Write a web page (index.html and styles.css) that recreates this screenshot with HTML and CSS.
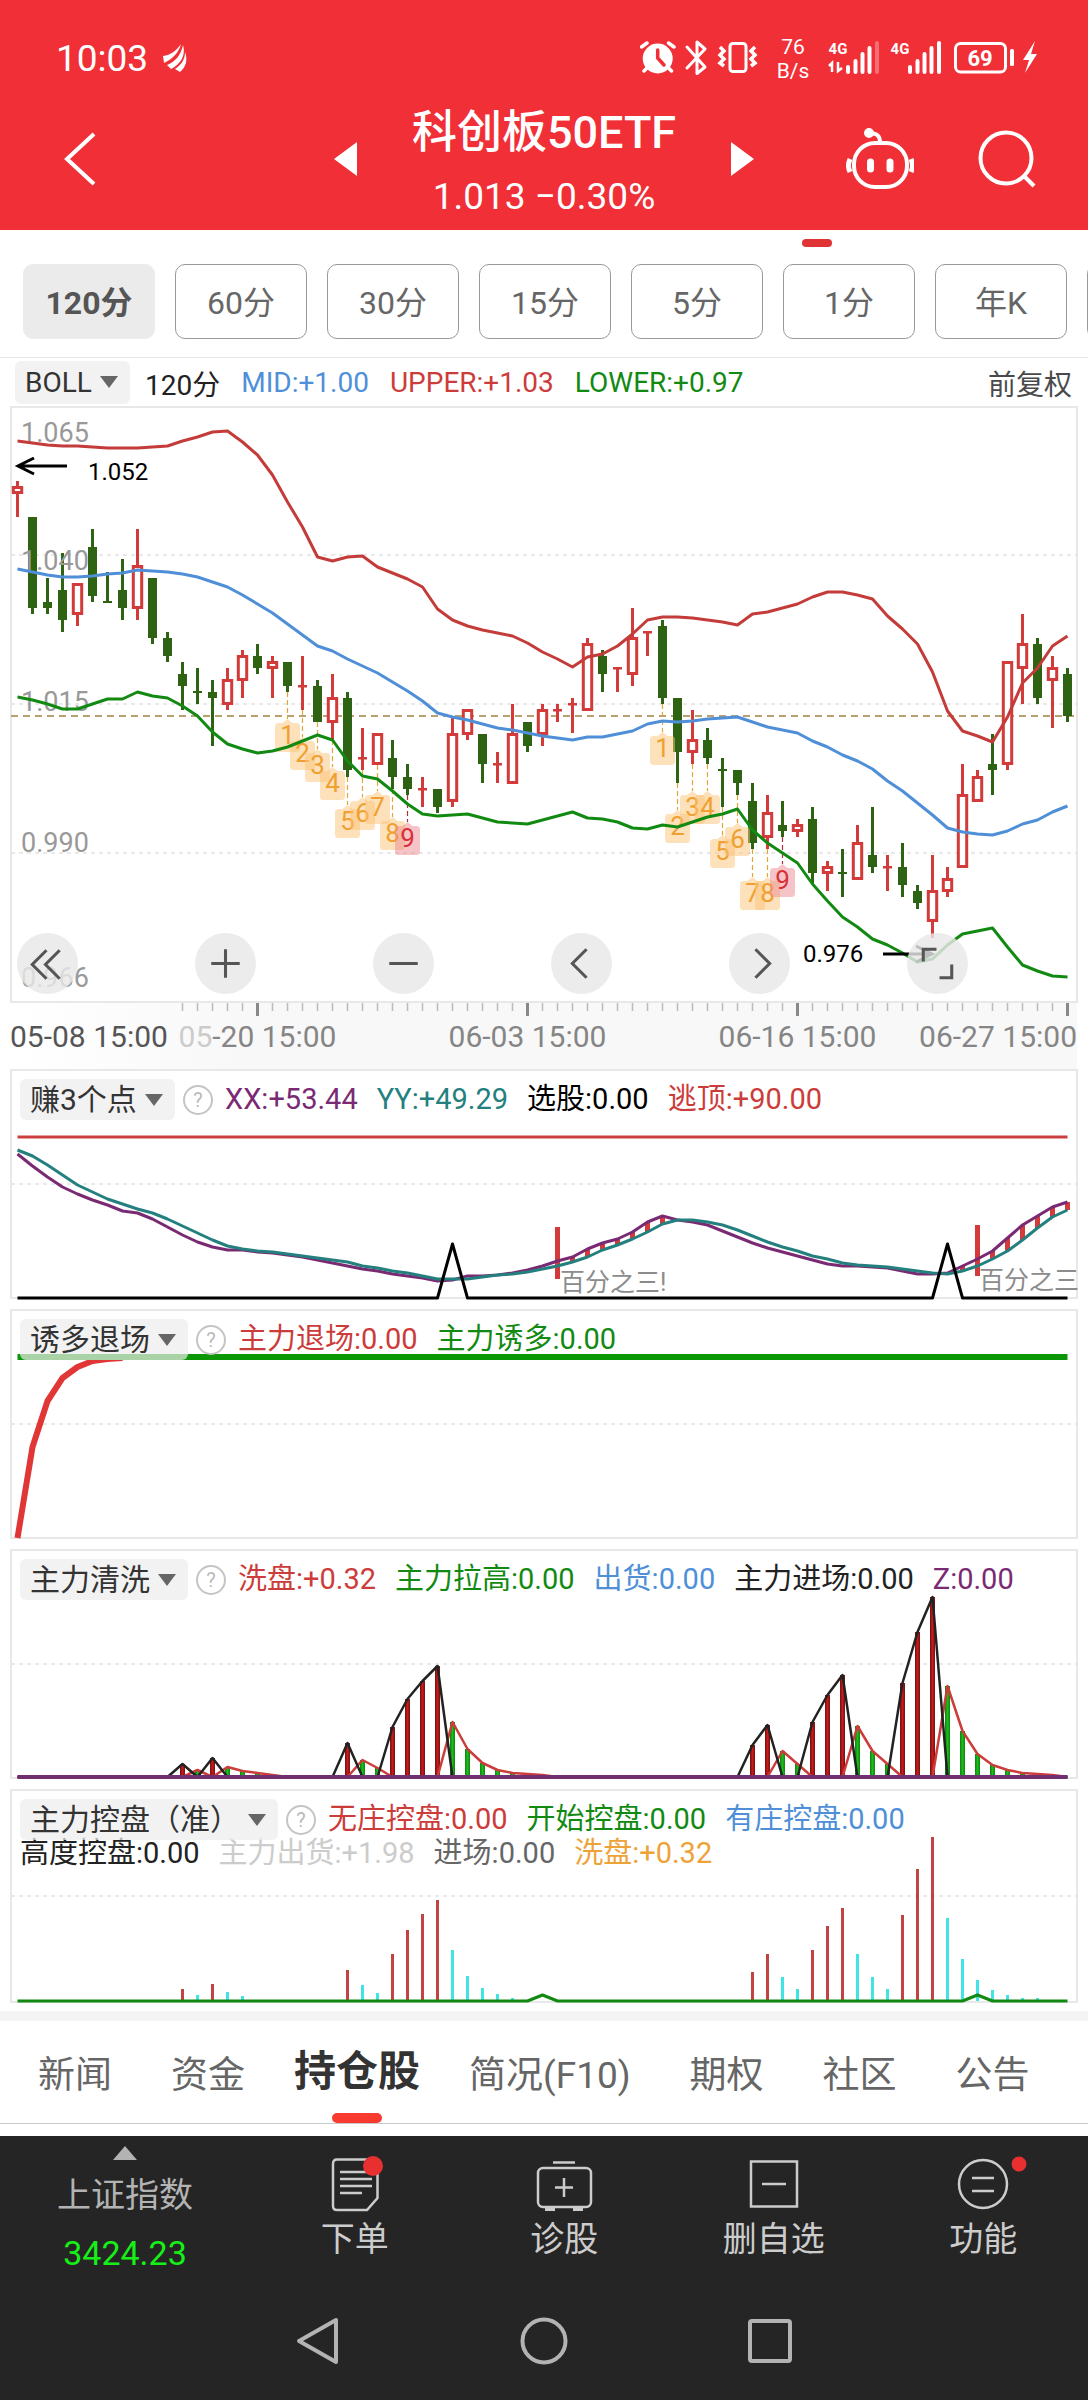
FILE: index.html
```html
<!DOCTYPE html>
<html lang="zh-CN">
<head>
    <meta charset="UTF-8">
    <meta name="viewport" content="width=device-width, initial-scale=1.0">
    <title>科创板50ETF</title>
    <link rel="stylesheet" href="styles.css">
</head>
<body>
    <header class="top">
        <div class="status">
            <div class="clock">
                <span>10:03</span>
                <svg width="26" height="30" viewBox="0 0 26 30" fill="#fff">
                    <path d="M1 13 C9 12 14 8 19 1 C17 9 11 16 2 20 Z"/>
                    <path d="M5 22 C13 19 19 12 21 2 C24 12 19 21 9 26 Z"/>
                    <path d="M13 26 C19 22 23 17 23 9 C26 17 24 24 18 29 Z"/>
                </svg>
            </div>
            <svg class="status-icons" width="400" height="56" viewBox="640 30 400 56">
                <!-- alarm -->
                <circle cx="657.7" cy="58.5" r="15" fill="#fff"/>
                <path d="M641.5 47 L647 43 M674 47 L668.500 43 M647 68 L644 71 M668.500 68 L671.500 71" stroke="#fff" stroke-width="3.500" stroke-linecap="round"/>
                <path d="M657.700 50 V58 L664 65" fill="none" stroke="#f12f37" stroke-width="3.500" stroke-linecap="round"/>
                <!-- bluetooth -->
                <path d="M687 47 L705 67 L697 73.500 V42 L705 49 L687 68" fill="none" stroke="#fff" stroke-width="3" stroke-linejoin="round" stroke-linecap="round"/>
                <!-- vibrate -->
                <rect x="730" y="43.500" width="16" height="28" rx="3" fill="none" stroke="#fff" stroke-width="3"/>
                <path d="M720 47 L724 51 L720 55 L724 59 L720 63 L724 66 M755 47 L751 51 L755 55 L751 59 L755 63 L751 66" fill="none" stroke="#fff" stroke-width="3.500"/>
                <text x="793" y="54" font-size="21" class="st">76</text>
                <text x="793" y="78" font-size="21" class="st">B/s</text>
                <text x="838" y="54" font-size="15" class="st bold">4G</text>
                <path d="M832 72 V63 L829 66 M838 62 V71 L842 68" fill="none" stroke="#fff" stroke-width="2.500"/>
                <path d="M848 67 V72 M855.500 61 V72 M862.500 54 V72 M869.500 48 V72" class="bars"/>
                <path d="M877 43 V72" class="bars dim"/>
                <text x="900" y="54" font-size="15" class="st bold">4G</text>
                <path d="M910 67 V72 M917.500 61 V72 M924.500 54 V72 M931.500 48 V72 M939 43 V72" class="bars"/>
                <!-- battery -->
                <rect x="955.500" y="43.500" width="50" height="28.500" rx="5" fill="none" stroke="#fff" stroke-width="3"/>
                <text x="980" y="66" font-size="22" class="st bold">69</text>
                <rect x="1010" y="49" width="4" height="17" rx="1.500" fill="#fff"/>
                <path d="M1035 41 L1023 60 H1029 L1025 73 L1037 54 H1031 Z" fill="#fff"/>
            </svg>
        </div>
        <div class="title-bar">
            <button class="icon-btn back" aria-label="返回">
                <svg width="36" height="56" viewBox="0 0 36 56"><path d="M32 3 L5 28 L32 53" fill="none" stroke="#fff" stroke-width="4"/></svg>
            </button>
            <button class="icon-btn" aria-label="上一只">
                <svg width="24" height="36" viewBox="0 0 24 36"><path d="M24 1 V35 L1 18 Z" fill="#fff"/></svg>
            </button>
            <div class="stock">
                <h1>科创板50ETF</h1>
                <p>1.013 −0.30%</p>
            </div>
            <button class="icon-btn" aria-label="下一只">
                <svg width="24" height="36" viewBox="0 0 24 36"><path d="M0 1 V35 L23 18 Z" fill="#fff"/></svg>
            </button>
            <div class="tools">
                <button class="icon-btn" aria-label="助手">
                    <svg width="68" height="62" viewBox="844 128 68 62" fill="none" stroke="#fff" stroke-width="4">
                        <rect x="852" y="143" width="53" height="44" rx="21"/>
                        <path d="M867 133 C875 133 878 136 878 142"/>
                        <circle cx="867" cy="133" r="3" fill="#fff"/>
                        <path d="M848 159 Q845 166 848 172 M909 159 Q912 166 909 172" stroke-width="5"/>
                        <path d="M868.500 162 V169 M888 162 V169" stroke-width="7" stroke-linecap="round"/>
                    </svg>
                </button>
                <button class="icon-btn" aria-label="搜索">
                    <svg width="60" height="58" viewBox="978 131 60 58" fill="none" stroke="#fff" stroke-width="4">
                        <circle cx="1006" cy="159" r="25.500"/>
                        <path d="M1024 177 L1034 187"/>
                    </svg>
                </button>
            </div>
        </div>
    </header>

    <main>
        <div class="periods-wrap">
            <i class="mark"></i>
            <nav class="periods">
                <button class="period on">120分</button>
                <button class="period">60分</button>
                <button class="period">30分</button>
                <button class="period">15分</button>
                <button class="period">5分</button>
                <button class="period">1分</button>
                <button class="period">年K</button>
                <button class="period" aria-label="更多周期"></button>
            </nav>
        </div>

        <div class="boll">
            <span class="pick"><select aria-label="主图指标"><option>BOLL</option></select></span>
            <span class="dark">120分</span>
            <span class="blue">MID:+1.00</span>
            <span class="red">UPPER:+1.03</span>
            <span class="green">LOWER:+0.97</span>
            <span class="adjust">前复权</span>
        </div>

        <section class="kline">
            <svg id="kline" class="plot" viewBox="0 405 1088 664"></svg>
            <div class="controls">
                <button aria-label="展开"><svg viewBox="0 0 60 60"><path d="M29 17 L15 31 L29 45 M42 17 L28 31 L42 45"/></svg></button>
                <button aria-label="放大"><svg viewBox="0 0 60 60"><path d="M16 30 H44 M30 16 V44"/></svg></button>
                <button aria-label="缩小"><svg viewBox="0 0 60 60"><path d="M16 30 H44"/></svg></button>
                <button aria-label="左移"><svg viewBox="0 0 60 60"><path d="M35 16 L21 30 L35 44"/></svg></button>
                <button aria-label="右移"><svg viewBox="0 0 60 60"><path d="M26 16 L40 30 L26 44"/></svg></button>
                <button aria-label="全屏"><svg viewBox="0 0 60 60"><path d="M16 28 V16 H29 M32 44 H44 V31"/></svg></button>
            </div>
        </section>

        <section class="panel">
            <svg id="p1" class="plot" viewBox="0 1069 1088 240"></svg>
            <div class="legend">
                <span class="pick"><select aria-label="指标一"><option>赚3个点</option></select></span>
                <button class="help" aria-label="说明">?</button>
                <span class="purple">XX:+53.44</span>
                <span class="teal">YY:+49.29</span>
                <span class="black">选股:0.00</span>
                <span class="red">逃顶:+90.00</span>
            </div>
        </section>

        <section class="panel">
            <svg id="p2" class="plot" viewBox="0 1309 1088 240"></svg>
            <div class="legend">
                <span class="pick"><select aria-label="指标二"><option>诱多退场</option></select></span>
                <button class="help" aria-label="说明">?</button>
                <span class="red">主力退场:0.00</span>
                <span class="green">主力诱多:0.00</span>
            </div>
        </section>

        <section class="panel">
            <svg id="p3" class="plot" viewBox="0 1549 1088 240"></svg>
            <div class="legend">
                <span class="pick"><select aria-label="指标三"><option>主力清洗</option></select></span>
                <button class="help" aria-label="说明">?</button>
                <span class="red">洗盘:+0.32</span>
                <span class="green">主力拉高:0.00</span>
                <span class="blue">出货:0.00</span>
                <span class="dark">主力进场:0.00</span>
                <span class="purple">Z:0.00</span>
            </div>
        </section>

        <section class="panel">
            <svg id="p4" class="plot" viewBox="0 1789 1088 222"></svg>
            <div class="legend">
                <span class="pick"><select aria-label="指标四"><option>主力控盘（准）</option></select></span>
                <button class="help" aria-label="说明">?</button>
                <span class="red">无庄控盘:0.00</span>
                <span class="green">开始控盘:0.00</span>
                <span class="blue">有庄控盘:0.00</span>
                <div class="legend-more">
                    <span class="dark">高度控盘:0.00</span>
                    <span class="light">主力出货:+1.98</span>
                    <span class="grey">进场:0.00</span>
                    <span class="orange">洗盘:+0.32</span>
                </div>
            </div>
        </section>

        <nav class="tabs">
            <a href="#">新闻</a>
            <a href="#">资金</a>
            <a href="#" class="on">持仓股</a>
            <a href="#">简况(F10)</a>
            <a href="#">期权</a>
            <a href="#">社区</a>
            <a href="#">公告</a>
        </nav>
    </main>

    <footer class="bottom">
        <div class="actions">
            <button class="index">
                <i class="up"></i>
                <span>上证指数</span>
                <b>3424.23</b>
            </button>
            <button class="action">
                <svg width="60" height="60" viewBox="325 2154 60 60">
                    <path d="M337 2159.500 H373 Q377.500 2159.500 377.500 2164 V2198 L367 2210 H337 Q333 2210 333 2206 V2164 Q333 2159.500 337 2159.500 Z M340 2172 H371 M340 2179 H372 M340 2186 H372 M340 2193 H362"/>
                    <circle class="dot" cx="373" cy="2166" r="10"/>
                </svg>
                <span>下单</span>
            </button>
            <button class="action">
                <svg width="60" height="60" viewBox="534 2154 60 60">
                    <rect x="538" y="2168" width="53" height="39" rx="5"/>
                    <path d="M553 2162.500 H575 M564 2178 V2197 M555 2187.500 H573"/>
                    <path d="M545 2209 H555 M573 2209 H583" stroke-width="4"/>
                </svg>
                <span>诊股</span>
            </button>
            <button class="action">
                <svg width="60" height="60" viewBox="744 2154 60 60">
                    <path d="M751 2161.500 H797 V2206.500 H751 Z M762 2184 H786"/>
                </svg>
                <span>删自选</span>
            </button>
            <button class="action">
                <svg width="60" height="60" viewBox="952 2154 60 60">
                    <circle cx="982" cy="2184" r="24"/>
                    <path d="M971 2178 H993 M971 2191 H993"/>
                    <circle class="dot" cx="1018" cy="2164" r="7.500"/>
                </svg>
                <span>功能</span>
            </button>
        </div>
        <div class="sysnav">
            <button aria-label="后退"><svg viewBox="0 0 50 50"><path d="M43 4 V46 L6 25 Z" stroke-linejoin="round"/></svg></button>
            <button aria-label="主页"><svg viewBox="0 0 50 50"><circle cx="25" cy="25" r="21.500"/></svg></button>
            <button aria-label="最近任务"><svg viewBox="0 0 50 50"><rect x="5" y="5" width="40" height="40" rx="2"/></svg></button>
        </div>
    </footer>
    <script src="script.js"></script>
</body>
</html>
```

FILE: styles.css
```css
* {
    box-sizing: border-box;
}
body {
    margin: 0;
    font-family: Roboto, "Noto Sans CJK SC", sans-serif;
    background-color: #fff;
    color: #333;
    overflow-x: hidden;
}
button, select {
    font-family: inherit;
    font-size: inherit;
    color: inherit;
    background: none;
    border: none;
    padding: 0;
    margin: 0;
}
h1, p {
    margin: 0;
    font-weight: normal;
}
svg {
    display: block;
}

/* header */
.top {
    background-color: #f12f37;
    color: #fff;
    height: 230px;
    padding-top: 36px;
}
.status {
    display: flex;
    justify-content: space-between;
    align-items: center;
    height: 44px;
    padding: 0 48px 0 56px;
}
.clock {
    display: flex;
    align-items: center;
    gap: 14px;
    font-size: 37px;
}
.st {
    fill: #fff;
    text-anchor: middle;
}
.bold {
    font-weight: bold;
}
.bars {
    stroke: #fff;
    stroke-width: 4;
    stroke-linecap: round;
}
.dim {
    opacity: 0.3;
}
.title-bar {
    display: grid;
    grid-template-columns: 1fr 24px 374px 24px 1fr;
    align-items: center;
    height: 150px;
}
.icon-btn {
    display: flex;
    align-items: center;
}
.title-bar > .icon-btn {
    padding-top: 8px;
}
.title-bar > .back {
    padding-left: 62px;
}
.stock {
    text-align: center;
    padding-top: 20px;
}
.stock h1 {
    font-size: 45px;
    line-height: 64px;
    font-weight: 500;
}
.stock p {
    font-size: 37px;
    line-height: 64px;
}
.tools {
    display: flex;
    justify-content: flex-end;
    align-items: center;
    gap: 64px;
    padding: 8px 50px 0 0;
}

/* period buttons */
.periods-wrap {
    padding-top: 9px;
    border-bottom: 1px solid #e5e5e5;
}
.mark {
    display: block;
    width: 30px;
    height: 8px;
    margin-left: 802px;
    border-radius: 4px;
    background-color: #e03434;
}
.periods {
    display: flex;
    gap: 20px;
    padding: 17px 0 18px 23px;
    overflow: hidden;
}
.period {
    flex: none;
    width: 132px;
    height: 75px;
    padding-bottom: 4px;
    border: 1px solid #999;
    border-radius: 10px;
    font-size: 32px;
    color: #666;
}
.period.on {
    background-color: #ebebeb;
    border-color: #ebebeb;
    font-weight: bold;
    color: #555;
}

/* drop-down chips and legends */
.pick {
    position: relative;
    flex: none;
    height: 41px;
    border-radius: 6px;
    background-color: rgba(236, 236, 236, 0.7);
    color: #333;
    font-size: 30px;
}
.pick select {
    appearance: none;
    height: 100%;
    padding: 0 38px 0 10px;
}
.pick::after {
    content: "";
    position: absolute;
    right: 12px;
    top: 15px;
    border: 9px solid transparent;
    border-top: 12px solid #666;
    border-bottom: 0;
    pointer-events: none;
}
.boll {
    display: flex;
    align-items: center;
    gap: 21px;
    height: 47px;
    padding: 2px 16px 0 15px;
    font-size: 28px;
    white-space: nowrap;
}
.boll .pick {
    height: 43px;
    margin-right: -6px;
    font-size: 28px;
}
.adjust {
    margin-left: auto;
    color: #4a4a4a;
}
.legend {
    display: flex;
    flex-wrap: wrap;
    align-items: center;
    align-self: start;
    gap: 0 19px;
    padding: 10px 0 0 20px;
    font-size: 29px;
    line-height: 41px;
    white-space: nowrap;
}
.help {
    width: 30px;
    height: 30px;
    margin: 0 -7px 0 -11px;
    border: 2px solid #c4c4c4;
    border-radius: 50%;
    font-size: 20px;
    line-height: 26px;
    color: #bbb;
}
.legend-more {
    display: flex;
    gap: 19px;
    width: 100%;
    margin-top: -7px;
}
.dark { color: #222; }
.black { color: #000; }
.grey { color: #666; }
.light { color: #ccc; }
.red { color: #cc3c3a; }
.green { color: #128a12; }
.blue { color: #4f8fd8; }
.purple { color: #7a2a72; }
.teal { color: #24807f; }
.orange { color: #eda338; }

/* charts */
.plot {
    width: 100%;
    height: auto;
}
.kline {
    position: relative;
}
.controls {
    position: absolute;
    left: 17px;
    right: 120px;
    bottom: 75px;
    display: flex;
    justify-content: space-between;
}
.controls button {
    width: 61px;
    height: 61px;
    border-radius: 50%;
    background-color: rgba(232, 232, 232, 0.82);
}
.controls path {
    fill: none;
    stroke: #555;
    stroke-width: 3;
}
.panel {
    display: grid;
}
.panel > * {
    grid-area: 1 / 1;
    min-width: 0;
}
.axis-y {
    font-size: 27px;
    fill: #999;
}
.axis-x {
    font-size: 30px;
    fill: #858585;
}
.axis-x.first {
    fill: #555;
}
.hilo {
    font-size: 24px;
    fill: #000;
}
.note {
    font-size: 25px;
    fill: #8c8c8c;
}
.td {
    font-size: 26px;
    text-anchor: middle;
}

/* news tabs */
.tabs {
    display: flex;
    align-items: center;
    gap: 59px;
    height: 113px;
    padding-left: 38px;
    border-top: 10px solid #f4f4f4;
    border-bottom: 1px solid #c8c8c8;
    margin-bottom: 12px;
    font-size: 37px;
    white-space: nowrap;
}
.tabs a {
    color: #666;
    text-decoration: none;
}
.tabs .on {
    position: relative;
    margin: 0 -10px;
    font-size: 42px;
    line-height: 102px;
    font-weight: bold;
    color: #333;
}
.tabs .on::after {
    content: "";
    position: absolute;
    left: calc(50% - 25px);
    bottom: 0;
    width: 50px;
    height: 10px;
    border-radius: 5px;
    background-color: #f93a2f;
}

/* bottom bars */
.bottom {
    background-color: #252525;
    color: #ccc;
    padding-bottom: 34px;
}
.actions {
    display: grid;
    grid-template-columns: 250px repeat(4, 1fr);
    height: 180px;
    font-size: 34px;
}
.index, .action {
    display: flex;
    flex-direction: column;
    align-items: center;
}
.index {
    padding-top: 10px;
    line-height: 58px;
    color: #b3b3b3;
}
.index b {
    font-weight: normal;
    color: #16f016;
}
.up {
    border: 12px solid transparent;
    border-bottom: 14px solid #b3b3b3;
    border-top: 0;
    margin-bottom: 6px;
}
.action {
    padding-top: 18px;
    line-height: 50px;
}
.action svg {
    overflow: visible;
    fill: none;
    stroke: #ccc;
    stroke-width: 2.5;
}
.action .dot {
    fill: #e93030;
    stroke: none;
}
.sysnav {
    display: flex;
    justify-content: center;
    gap: 176px;
}
.sysnav button {
    width: 50px;
    height: 50px;
}
.sysnav svg {
    fill: none;
    stroke: #b3b3b3;
    stroke-width: 4;
}
```

FILE: script.js
```js
// All plots share one coordinate space, each svg shows its own slice of it.
var NS = 'http://www.w3.org/2000/svg';
var LEFT = 11, RIGHT = 1077;
var RED = '#d33a3a', GREEN = '#2f6314';

function x(i) {
    return 17.5 + i * 15;
}

function add(parent, tag, attrs, text) {
    var el = document.createElementNS(NS, tag);
    for (var k in attrs) el.setAttribute(k, attrs[k]);
    if (text) el.textContent = text;
    parent.appendChild(el);
    return el;
}

function line(svg, x1, y1, x2, y2, color, width, dash) {
    var a = { x1: x1, y1: y1, x2: x2, y2: y2, stroke: color, 'stroke-width': width };
    if (dash) a['stroke-dasharray'] = dash;
    return add(svg, 'line', a);
}

function curve(svg, ys, color, width) {
    var pts = ys.map(function(y, i) { return x(i) + ',' + y; }).join(' ');
    add(svg, 'polyline', { points: pts, fill: 'none', stroke: color, 'stroke-width': width, 'stroke-linejoin': 'round' });
}

function frame(svg, top, bottom, grids) {
    add(svg, 'rect', { x: LEFT, y: top, width: RIGHT - LEFT, height: bottom - top, fill: 'none', stroke: '#e8e8e8', 'stroke-width': 2 });
    grids.forEach(function(y) {
        line(svg, LEFT, y, RIGHT, y, '#e2e2e2', 1.5, '4 4');
    });
}

// flat line at base with the given points lifted
function spikes(base, points) {
    var ys = [];
    for (var i = 0; i <= 70; i++) ys.push(points[i] || base);
    return ys;
}

// direction, high, low, body top, body bottom
var candles = [
    ['r',481,517,486,494], ['g',517,614,517,608], ['g',578,614,602,608], ['g',553,632,590,620], ['r',583,626,583,615],
    ['g',529,602,547,596], ['g',572,603,601,603], ['g',559,620,590,608], ['r',529,620,565,609], ['g',578,644,578,638],
    ['g',632,662,638,656], ['g',662,710,674,686], ['g',668,704,691,693], ['g',680,746,692,698], ['r',668,710,679,705],
    ['r',650,698,655,681], ['g',644,674,656,668], ['r',656,698,661,669], ['g',662,692,662,686], ['r',656,710,685,687],
    ['g',680,722,686,722], ['r',674,740,697,723], ['g',692,777,698,770], ['r',728,770,757,759], ['r',733,765,733,765],
    ['g',740,789,758,777], ['g',764,795,777,789], ['r',777,807,788,790], ['g',789,813,789,807], ['r',716,807,733,802],
    ['r',709,740,709,735], ['g',734,783,734,764], ['r',752,783,763,765], ['r',704,784,733,784], ['g',722,752,722,746],
    ['r',704,746,709,735], ['r',704,722,709,711], ['r',698,733,703,705], ['r',638,711,643,711], ['g',650,692,656,674],
    ['r',667,692,667,669], ['r',608,686,637,675], ['r',631,656,631,633], ['g',620,704,626,698], ['g',698,783,698,752],
    ['r',710,764,739,753], ['g',728,764,740,758], ['g',758,807,769,771], ['g',770,795,770,783], ['g',783,849,801,843],
    ['r',795,849,812,838], ['g',801,837,825,831], ['r',819,837,824,832], ['g',807,883,819,873], ['r',861,891,866,874],
    ['g',849,897,872,874], ['r',825,880,842,880], ['g',807,873,855,867], ['r',855,891,866,868], ['g',843,897,867,885],
    ['g',885,909,891,903], ['r',855,938,890,922], ['r',867,897,878,892], ['r',764,868,794,868], ['r',770,802,776,802],
    ['g',734,795,764,770], ['r',661,770,661,765], ['r',614,704,643,669], ['g',638,704,644,698], ['r',656,728,667,681],
    ['g',668,722,674,716]
];
var upper = [441,443,445,446,446,447,448,448,448,447,446,441,437,432,431,442,455,475,502,527,557,561,557,556,567,573,579,587,609,620,626,630,633,636,643,652,659,667,657,654,646,634,620,617,617,618,620,622,625,614,612,608,604,597,592,592,595,599,616,629,644,672,711,731,736,742,717,683,668,646,636];
var mid = [569,572,575,577,577,576,574,573,570,571,572,574,577,582,587,595,604,613,624,635,646,651,659,666,673,682,691,701,713,717,720,724,728,730,733,736,738,740,737,737,734,731,724,721,722,721,719,718,717,722,727,730,733,741,747,755,761,769,781,791,803,815,828,832,834,835,831,824,820,812,806];
var lower = [697,700,704,709,709,704,699,699,692,696,698,706,716,732,744,749,753,751,747,741,735,740,761,776,779,791,804,814,816,815,814,818,822,823,824,820,816,812,818,819,822,828,829,825,827,822,817,814,809,830,843,853,863,884,901,917,927,939,945,953,962,959,945,934,931,928,947,965,971,976,977];
// nine-turn counters: index, y of the tip
var counts = [
    [[18,719],[19,737],[20,749],[21,767],[22,805],[23,797],[24,791],[25,817],[26,822]],
    [[43,732],[44,810],[45,791],[46,791],[47,835],[48,823],[49,877],[50,877],[51,864]]
];

function drawCandle(svg, c, i) {
    var cx = x(i);
    if (c[0] == 'g') {
        line(svg, cx, c[1], cx, c[2], GREEN, 3);
        add(svg, 'rect', { x: cx - 4.5, y: c[3], width: 9, height: c[4] - c[3], fill: GREEN });
    } else if (c[4] - c[3] <= 2) {
        line(svg, cx, c[1], cx, c[2], RED, 3);
        add(svg, 'rect', { x: cx - 4.5, y: c[3], width: 9, height: 2.5, fill: RED });
    } else {
        line(svg, cx, c[1], cx, c[3], RED, 3);
        line(svg, cx, c[4], cx, c[2], RED, 3);
        add(svg, 'rect', { x: cx - 4.2, y: c[3] + 1.5, width: 8.4, height: c[4] - c[3] - 3, fill: '#fff', stroke: RED, 'stroke-width': 3 });
    }
}

function drawKline() {
    var svg = document.getElementById('kline');

    // time axis background
    var defs = add(svg, 'defs', {});
    var g = add(defs, 'linearGradient', { id: 'fade' });
    add(g, 'stop', { offset: 0, 'stop-color': '#fff' });
    add(g, 'stop', { offset: 0.22, 'stop-color': '#f8f8f8' });
    add(svg, 'rect', { x: LEFT, y: 1003, width: RIGHT - LEFT, height: 66, fill: 'url(#fade)' });

    frame(svg, 407, 1002, [555, 704, 853]);
    line(svg, LEFT, 716, RIGHT, 716, '#b8a070', 2, '7 5');

    candles.forEach(function(c, i) { drawCandle(svg, c, i); });
    [['1.065',442], ['1.040',570], ['1.015',711], ['0.990',852], ['0.966',987]].forEach(function(l) {
        add(svg, 'text', { x: 21, y: l[1], 'class': 'axis-y' }, l[0]);
    });

    counts.forEach(function(group) {
        group.forEach(function(m, n) {
            var cx = x(m[0]), y = m[1], last = n == 8;
            line(svg, cx, candles[m[0]][2], cx, y, last ? '#b03040' : '#e0a838', 1.2, '5 3');
            add(svg, 'path', {
                d: 'M' + cx + ' ' + y + ' l5 4 h4 q3.500 0 3.500 3.500 v22 q0 3.500 -3.500 3.500 h-18 q-3.500 0 -3.500 -3.500 v-22 q0 -3.500 3.500 -3.500 h4 z',
                fill: last ? '#ee8a90' : '#fcc478', 'fill-opacity': 0.5
            });
            add(svg, 'text', { x: cx, y: y + 25, 'class': 'td', fill: last ? '#d8303a' : '#f0a030' }, String(n + 1));
        });
    });

    curve(svg, upper, '#c43c3a', 3);
    curve(svg, mid, '#4f8fd8', 3);
    curve(svg, lower, '#128a12', 3);

    // highest and lowest price
    add(svg, 'path', { d: 'M67 466 H18 M34 458 L18 466 L34 474', fill: 'none', stroke: '#000', 'stroke-width': 3 });
    add(svg, 'text', { x: 88, y: 480, 'class': 'hilo' }, '1.052');
    add(svg, 'path', { d: 'M883 954 H932 M916 946 L932 954 L916 962', fill: 'none', stroke: '#000', 'stroke-width': 3 });
    add(svg, 'text', { x: 803, y: 962, 'class': 'hilo' }, '0.976');

    for (var i = 11; i <= 70; i++) {
        var major = (i - 16) % 18 == 0;
        line(svg, x(i), 1003, x(i), major ? 1016 : 1011, major ? '#888' : '#bbb', major ? 3 : 1.5);
    }
    add(svg, 'text', { x: 10, y: 1047, 'class': 'axis-x first' }, '05-08 15:00');
    var label = add(svg, 'text', { x: x(16), y: 1047, 'class': 'axis-x', 'text-anchor': 'middle' });
    add(label, 'tspan', { fill: '#ccc' }, '05');
    add(label, 'tspan', {}, '-20 15:00');
    add(svg, 'text', { x: x(34), y: 1047, 'class': 'axis-x', 'text-anchor': 'middle' }, '06-03 15:00');
    add(svg, 'text', { x: x(52), y: 1047, 'class': 'axis-x', 'text-anchor': 'middle' }, '06-16 15:00');
    add(svg, 'text', { x: RIGHT, y: 1047, 'class': 'axis-x', 'text-anchor': 'end' }, '06-27 15:00');
}

function drawProfit() {
    var svg = document.getElementById('p1');
    var xx = [1154,1166,1177,1187,1194,1200,1205,1211,1213,1219,1227,1235,1242,1247,1250,1250,1252,1253,1255,1257,1260,1263,1266,1269,1271,1274,1276,1278,1281,1280,1276,1276,1275,1273,1270,1266,1261,1257,1249,1243,1239,1232,1222,1216,1220,1222,1225,1231,1237,1243,1248,1252,1256,1260,1264,1266,1266,1267,1268,1271,1274,1274,1273,1266,1259,1251,1238,1225,1216,1207,1202];
    var yy = [1150,1156,1165,1175,1185,1192,1199,1204,1209,1213,1219,1226,1233,1240,1246,1249,1251,1252,1254,1256,1258,1260,1262,1266,1268,1271,1273,1276,1279,1279,1279,1277,1275,1274,1272,1269,1266,1262,1257,1250,1245,1239,1232,1224,1220,1220,1222,1225,1230,1236,1242,1247,1251,1256,1259,1263,1265,1266,1267,1269,1271,1273,1274,1271,1266,1259,1251,1240,1228,1217,1210];
    frame(svg, 1070, 1298, [1184]);
    line(svg, x(0), 1137, x(70), 1137, '#c9403e', 3);
    xx.forEach(function(y, i) {
        if (i > 36 && yy[i] - y > 3) line(svg, x(i), y, x(i), yy[i], RED, 5);
    });
    line(svg, x(36), 1227, x(36), 1279, RED, 5);
    line(svg, x(64), 1225, x(64), 1276, RED, 5);
    curve(svg, xx, '#7a2a72', 3);
    curve(svg, yy, '#24807f', 3);
    curve(svg, spikes(1298, { 29: 1244, 62: 1244 }), '#000', 3);
    add(svg, 'text', { x: 560, y: 1291, 'class': 'note' }, '百分之三!');
    add(svg, 'text', { x: 979, y: 1289, 'class': 'note' }, '百分之三');
}

function drawExit() {
    var svg = document.getElementById('p2');
    frame(svg, 1310, 1538, [1424]);
    curve(svg, [1538,1447,1401,1378,1367,1361,1359,1358], '#e03636', 6);
    line(svg, x(0), 1357, x(70), 1357, '#0b9606', 6);
}

function drawWash() {
    var svg = document.getElementById('p3');
    var rise = { 11:1764, 13:1758, 22:1743, 25:1727, 26:1699, 27:1681, 28:1666, 49:1745, 50:1725, 53:1722, 54:1695, 55:1675, 59:1683, 60:1632, 61:1597 };
    var fall = { 12:1770, 14:1767, 15:1771, 16:1773, 17:1775, 23:1760, 24:1768, 29:1722, 30:1749, 31:1763, 32:1770, 33:1773, 34:1774, 35:1775, 51:1751, 52:1764, 56:1726, 57:1751, 58:1764, 62:1686, 63:1731, 64:1754, 65:1765, 66:1770, 67:1773, 68:1774, 69:1775 };
    var i;
    frame(svg, 1550, 1778, [1664]);
    for (i in rise) {
        line(svg, x(+i), rise[i], x(+i), 1776, '#7d1414', 5);
        line(svg, x(+i), rise[i], x(+i), 1776, '#d01818', 2);
    }
    for (i in fall) {
        line(svg, x(+i), fall[i], x(+i), 1776, '#158a15', 5);
        line(svg, x(+i), fall[i], x(+i), 1776, '#18c018', 2);
    }
    curve(svg, spikes(1777, fall), '#cc3c3a', 2.5);
    curve(svg, spikes(1777, rise), '#222', 2.5);
    line(svg, x(0), 1777, x(70), 1777, '#6f2f70', 4);
}

function drawControl() {
    var svg = document.getElementById('p4');
    var red = { 11:1989, 13:1984, 22:1970, 25:1954, 26:1930, 27:1914, 28:1900, 49:1972, 50:1954, 53:1950, 54:1926, 55:1908, 59:1915, 60:1869, 61:1837 };
    var cyan = { 12:1995, 14:1992, 15:1996, 23:1985, 24:1993, 29:1950, 30:1976, 31:1988, 32:1994, 33:1998, 51:1977, 52:1989, 56:1954, 57:1977, 58:1989, 62:1918, 63:1959, 64:1980, 65:1990, 66:1995, 67:1998, 68:1998 };
    var i;
    frame(svg, 1790, 2002, [1896]);
    for (i in red) line(svg, x(+i), red[i], x(+i), 2001, '#c24442', 3);
    for (i in cyan) line(svg, x(+i), cyan[i], x(+i), 2001, '#40e4e4', 3);
    curve(svg, spikes(2001, { 35: 1995, 64: 1995 }), '#128a12', 3);
}

drawKline();
drawProfit();
drawExit();
drawWash();
drawControl();
```
